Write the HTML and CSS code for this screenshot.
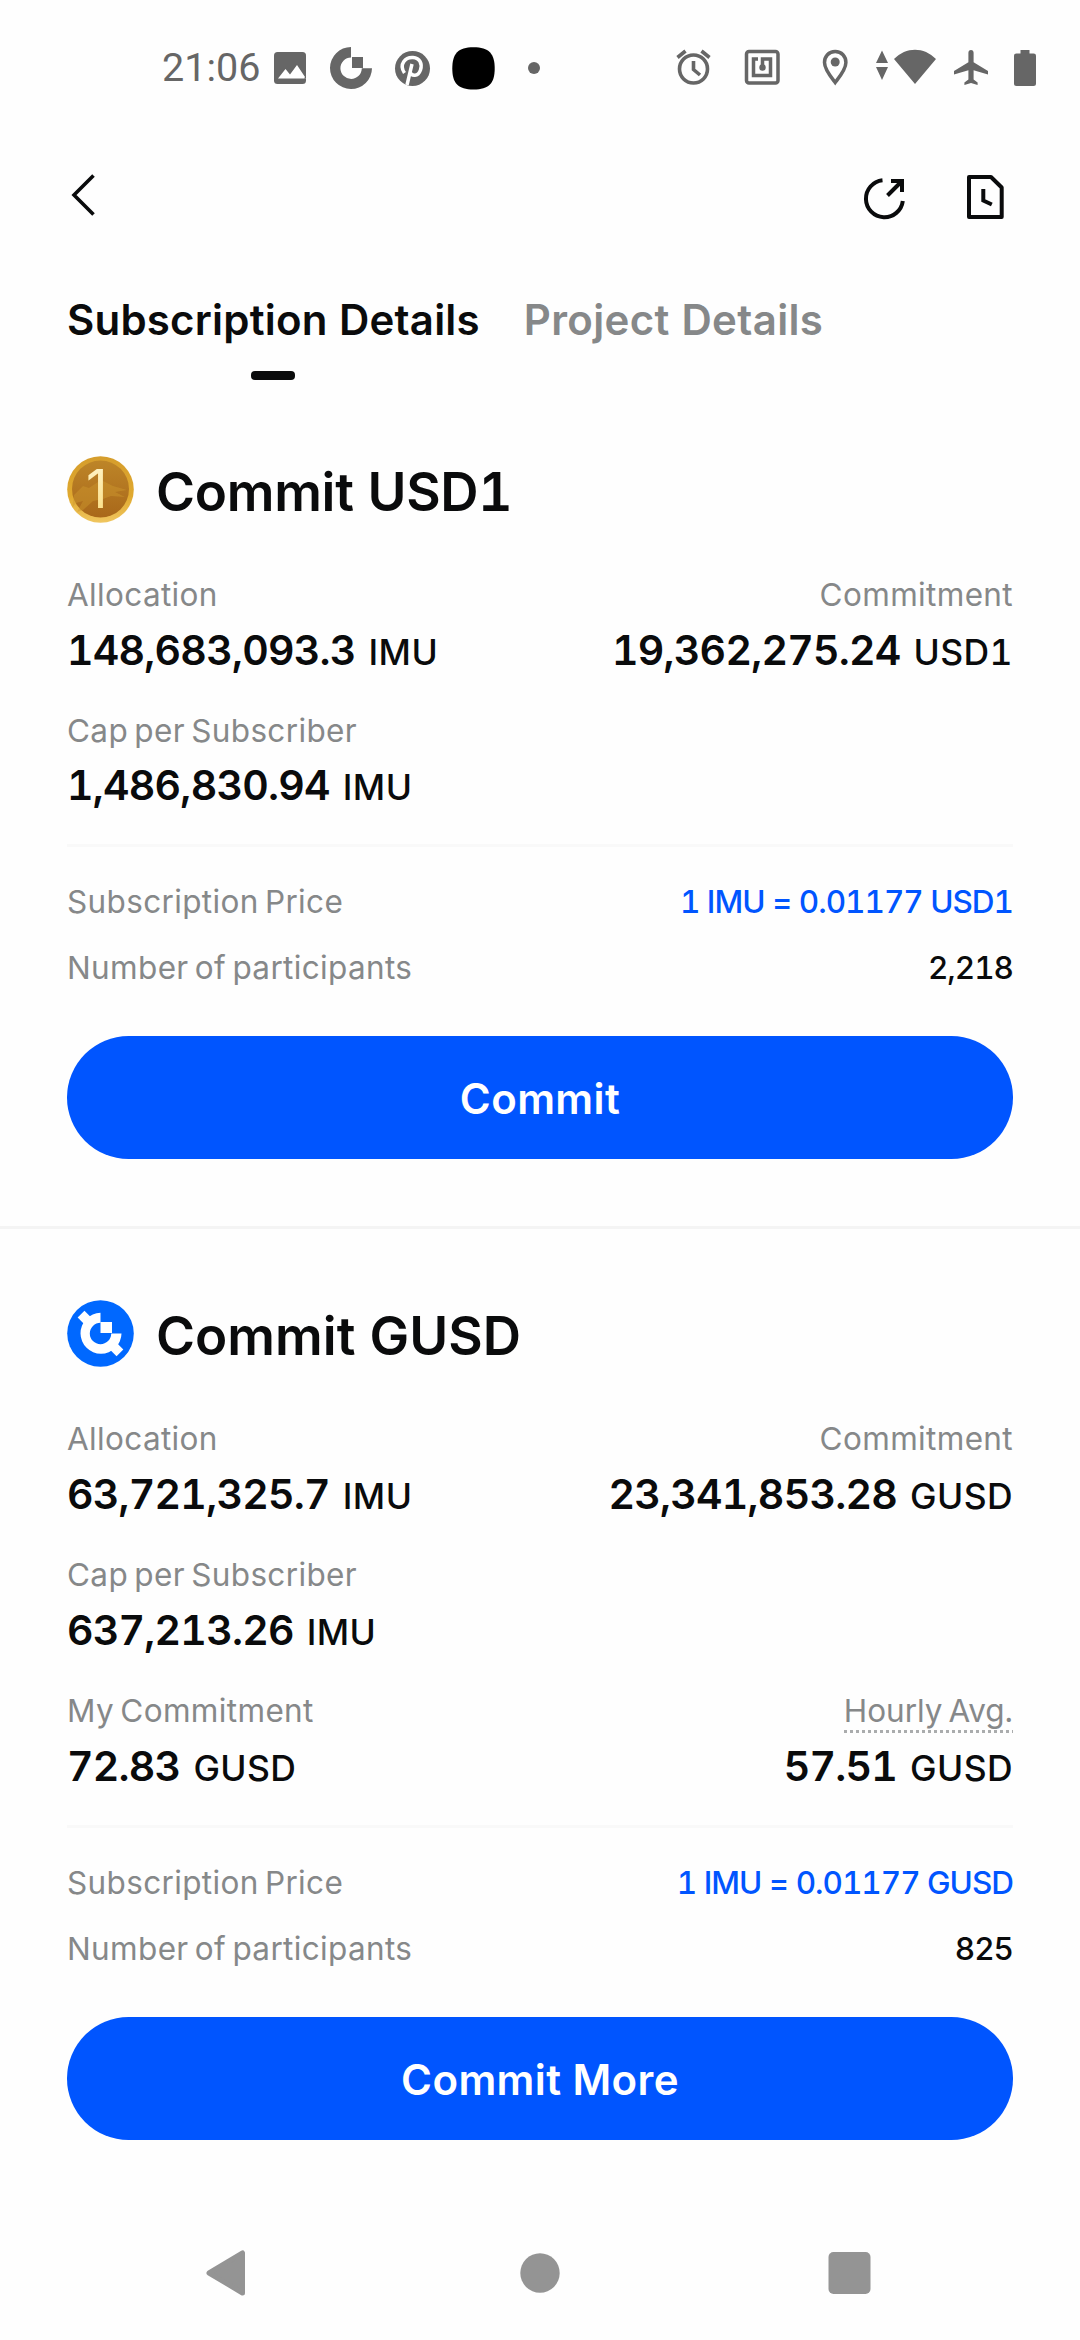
FILE: index.html
```html
<!DOCTYPE html>
<html lang="en">
<head>
<meta charset="utf-8">
<title>Subscription Details</title>
<link rel="stylesheet" href="styles.css">
</head>
<body>
<div class="screen">
  <div class="status">
    <div class="status-left">
      <span class="time">21:06</span>
      <svg width="36" height="44" viewBox="272 45 36 44"><rect x="274" y="51" width="32" height="32" rx="3.5" fill="#666"/><path d="M278 77.500l7.500-9.500 4.500 5.500 7-9.500 9 13.500z" fill="#fff"/><path d="M304 77.500h2v-3z" fill="#666"/></svg>
      <svg width="46" height="44" viewBox="328 45 46 44"><path d="M351 46a21 21 0 1 0 21 21.200H361.800A10.700 10.700 0 1 1 351 56.500z" fill="#666"/><rect x="352" y="56" width="11" height="11" fill="#666"/></svg>
      <svg width="40" height="44" viewBox="392 45 40 44"><circle cx="412.500" cy="67.500" r="17.500" fill="#666"/><path d="M407 84l5-21M404.500 72c-6-9 1-16 8.500-15.500 7 .5 9.500 6.500 7.500 12.500-2.500 7-9 6.500-10.500 2" fill="none" stroke="#fff" stroke-width="3.500"/></svg>
      <svg width="46" height="44" viewBox="450 45 46 44"><path d="M473.500 46.300c15.500 0 21.200 6.500 21.200 21.200s-5.700 21-21.200 21-21.200-6.300-21.200-21 5.700-21.200 21.200-21.200z"/></svg>
      <svg width="14" height="44" viewBox="527 45 14 44"><circle cx="534" cy="67" r="6" fill="#666"/></svg>
    </div>
    <div class="status-right">
      <svg width="38" height="44" viewBox="675 45 38 44" fill="none" stroke="#666" stroke-width="3.600"><circle cx="693.500" cy="68" r="14"/><path d="M693.500 60v8.500l6.500 5.500M677.500 56.500l8-6.500M709.500 56.500l-8-6.500"/></svg>
      <svg width="38" height="44" viewBox="743 45 38 44" fill="none" stroke="#666" stroke-width="3.500"><rect x="746.500" y="50.500" width="31.500" height="31.500" rx="2.500"/><path d="M758 58h-4.500v16.500h17V58h-8v9"/><circle cx="762.500" cy="66.500" r="3.200" fill="#666" stroke="none"/></svg>
      <svg width="28" height="44" viewBox="821 45 28 44"><path d="M835.200 50.500c-6.500 0-10.700 4.800-10.700 11 0 7 6.500 14.500 10.700 20 4.200-5.500 10.700-13 10.700-20 0-6.200-4.200-11-10.700-11z" fill="none" stroke="#666" stroke-width="3.500"/><circle cx="835.200" cy="61" r="4.500" fill="#666"/></svg>
      <svg width="62" height="44" viewBox="875 45 62 44" fill="#666"><path d="M882 49.500l6 12.500h-12zM882 79l6-13h-12zM915 83l-21-25c12-12.500 30-12.500 42 0z"/></svg>
      <svg width="36" height="44" viewBox="953 45 36 44" fill="#666"><path d="M971 49c-1.700 0-2.600 1.200-2.600 2.800v9.400L954 70v3.500l14.400-4.300v9.300l-4 3v2.500l6.600-1.900 6.600 1.900v-2.500l-4-3v-9.300l14.400 4.300V70l-14.400-8.800v-9.400c0-1.600-.9-2.800-2.600-2.800z"/></svg>
      <svg width="24" height="44" viewBox="1013 45 24 44" fill="#666"><path d="M1020.500 49h9v3.500h4c1.700 0 2.500.8 2.500 2.500v27.500c0 1.700-.8 2.500-2.500 2.500h-17c-1.700 0-2.500-.8-2.500-2.500V55c0-1.700.8-2.500 2.500-2.500h4z"/></svg>
    </div>
  </div>

  <header class="header">
    <svg width="28" height="60" viewBox="70 167 28 60" fill="none" stroke="#0a0b0c" stroke-width="3.600"><path d="M93.500 175.500L74 195l19.500 19.500"/></svg>
    <div class="actions">
      <svg width="46" height="60" viewBox="862 167 46 60" fill="none" stroke="#0a0b0c" stroke-width="4"><path d="M882.500 180.300A18.500 18.500 0 1 0 902.800 201M887.500 195.500L902 181M891 181h11v11"/></svg>
      <svg width="42" height="60" viewBox="965 167 42 60" fill="none" stroke="#0a0b0c" stroke-width="4" stroke-linejoin="round"><path d="M969 177h22l10.700 10.500V217H969z"/><path d="M983.300 189v11.500l8.500 4" stroke-linejoin="miter"/></svg>
    </div>
  </header>

  <nav class="tabs">
    <div class="tab active">Subscription Details</div>
    <div class="tab">Project Details</div>
  </nav>

  <section class="pool first">
    <div class="pool-head">
      <svg width="67" height="67" viewBox="0 0 67 67">
        <defs>
          <linearGradient id="rim" x1="0" y1="0" x2="0" y2="1"><stop offset="0" stop-color="#d59d2c"/><stop offset=".6" stop-color="#e0a92f"/><stop offset="1" stop-color="#f0c660"/></linearGradient>
          <linearGradient id="face" x1="0" y1="0" x2="0" y2="1"><stop offset="0" stop-color="#bd8528"/><stop offset="1" stop-color="#a9681a"/></linearGradient>
          <linearGradient id="one" x1="0" y1="0" x2="0" y2="1"><stop offset="0" stop-color="#fff6cf"/><stop offset="1" stop-color="#fbdc7c"/></linearGradient>
        </defs>
        <circle cx="33.500" cy="33.500" r="33.300" fill="url(#rim)"/>
        <circle cx="33.500" cy="33" r="28.500" fill="url(#face)"/>
        <path d="M7 39l9-9 6 2 12-8 12 6 14 4-12 2 10 5-14-1-8 3-10 2-10 9-6 2 6-11-7 2-4 5z" fill="#cf982f" opacity=".45"/>
        <text class="coin-one" x="19" y="52" fill="url(#one)">1</text>
      </svg>
      <h2 class="usd">Commit USD1</h2>
    </div>
    <div class="stats">
      <div class="stat"><div class="label">Allocation</div><div class="value">148,683,093.3<span class="unit">IMU</span></div></div>
      <div class="stat end"><div class="label">Commitment</div><div class="value">19,362,275.24<span class="unit">USD1</span></div></div>
      <div class="stat"><div class="label">Cap per Subscriber</div><div class="value">1,486,830.94<span class="unit">IMU</span></div></div>
    </div>
    <div class="details">
      <div class="row"><span class="label">Subscription Price</span><span class="data price">1 IMU = 0.01177 USD1</span></div>
      <div class="row"><span class="label">Number of participants</span><span class="data">2,218</span></div>
    </div>
    <button class="cta">Commit</button>
  </section>

  <section class="pool second">
    <div class="pool-head">
      <svg width="67" height="67" viewBox="0 0 67 67">
        <circle cx="33.500" cy="33.500" r="33.300" fill="#0068ff"/>
        <g fill="#fff">
          <rect x="-4.800" y="-27.500" width="9.600" height="12" transform="translate(33.500 33.500) rotate(-45)"/>
          <rect x="-4.800" y="-27.500" width="9.600" height="12" transform="translate(33.500 33.500) rotate(135)"/>
          <path d="M33.500 12.700a20.500 20.500 0 1 0 21 20.800H44.200a10.700 10.700 0 1 1-10.700-10.700z"/>
          <rect x="33.500" y="22" width="11.500" height="11"/>
        </g>
      </svg>
      <h2>Commit GUSD</h2>
    </div>
    <div class="stats">
      <div class="stat"><div class="label">Allocation</div><div class="value">63,721,325.7<span class="unit">IMU</span></div></div>
      <div class="stat end"><div class="label">Commitment</div><div class="value">23,341,853.28<span class="unit">GUSD</span></div></div>
      <div class="stat wide"><div class="label">Cap per Subscriber</div><div class="value">637,213.26<span class="unit">IMU</span></div></div>
      <div class="stat"><div class="label">My Commitment</div><div class="value">72.83<span class="unit">GUSD</span></div></div>
      <div class="stat end"><div class="label hint">Hourly Avg.</div><div class="value">57.51<span class="unit">GUSD</span></div></div>
    </div>
    <div class="details">
      <div class="row"><span class="label">Subscription Price</span><span class="data price">1 IMU = 0.01177 GUSD</span></div>
      <div class="row"><span class="label">Number of participants</span><span class="data">825</span></div>
    </div>
    <button class="cta">Commit More</button>
  </section>

  <div class="navbar">
    <svg width="40" height="46" viewBox="0 0 40 46"><path d="M36.500 3v40L3 23z" fill="#949494" stroke="#949494" stroke-width="5" stroke-linejoin="round"/></svg>
    <svg class="home" width="40" height="40" viewBox="0 0 40 40"><circle cx="20" cy="20" r="19.700" fill="#949494"/></svg>
    <svg class="recents" width="43" height="42" viewBox="0 0 43 42"><rect x=".5" width="42" height="42" rx="5" fill="#949494"/></svg>
  </div>
</div>
</body>
</html>
```
FILE: styles.css
```css
* { box-sizing: border-box; }

body {
  margin: 0;
  background: #fefefe;
  color: #0a0b0c;
  font-family: Inter, "Liberation Sans", sans-serif;
  font-feature-settings: "tnum";
}

svg { display: block; flex: none; }

.screen {
  width: 1080px;
  height: 2340px;
  display: flex;
  flex-direction: column;
  overflow: hidden;
}

.status {
  height: 135px;
  padding: 0 43px 0 162px;
  display: flex;
  justify-content: space-between;
  align-items: center;
}
.status-left, .status-right { display: flex; align-items: center; }
.time {
  width: 110px;
  padding-top: 1px;
  font: 400 39.5px/44px Roboto, sans-serif;
  color: #666;
}
.status-left svg + svg { margin-left: 18px; }
.status-left svg:nth-child(3) { margin-left: 20px; }
.status-left svg:last-child { margin-left: 31px; }
.status-right { gap: 27px; }
.status-right svg:nth-child(2) { margin-left: 3px; }
.status-right svg:nth-child(3) { margin-left: 13px; }
.status-right svg:nth-child(4) { margin-left: -1px; }
.status-right svg:nth-child(5) { margin-left: -11px; }
.status-right svg:nth-child(6) { margin-left: -3px; }

.header {
  height: 124px;
  padding: 0 73px 0 70px;
  display: flex;
  justify-content: space-between;
  align-items: center;
}
.actions { display: flex; gap: 57px; }

.tabs {
  display: flex;
  gap: 44px;
  margin-top: 31px;
  padding: 0 67px;
}
.tab {
  font-size: 42px;
  line-height: 60px;
  font-weight: 600;
  letter-spacing: .35px;
  color: #868889;
}
.tab.active { color: #0a0b0c; letter-spacing: .2px; }
.tab.active::after {
  content: "";
  display: block;
  width: 44px;
  height: 9px;
  margin: 21px auto 0;
  border-radius: 4px;
  background: #0a0b0c;
}

.pool { padding: 0 67px; }
.first { padding-top: 76px; padding-bottom: 67px; border-bottom: 3px solid #f4f4f4; }
.second { padding-top: 71px; }

.pool-head { display: flex; gap: 22px; height: 67px; }
.pool-head h2 {
  margin: 0;
  padding-top: 5px;
  font-size: 53px;
  line-height: 63px;
  font-weight: 600;
}
.pool-head .usd { letter-spacing: -.3px; }
.coin-one { font-family: Inter, sans-serif; font-size: 53px; font-weight: 400; font-feature-settings: normal; }

.stats {
  display: grid;
  grid-template-columns: auto auto;
  justify-content: space-between;
  row-gap: 33.4px;
  margin-top: 52px;
}
.wide { grid-column: 1 / -1; }
.stat { display: flex; flex-direction: column; gap: 6.5px; align-items: flex-start; }
.end { align-items: flex-end; }
.label {
  font-size: 31.5px;
  line-height: 40px;
  letter-spacing: .35px;
  word-spacing: -2.5px;
  color: #868889;
}
.hint {
  height: 40px;
  box-sizing: content-box;
  padding-bottom: 2px;
  margin-bottom: -2px;
  letter-spacing: 0;
  background: repeating-linear-gradient(90deg, #aaacad 0 3px, transparent 3px 6px) 0 100% / 100% 3px no-repeat;
}
.value {
  font-size: 41px;
  line-height: 56px;
  font-weight: 600;
  letter-spacing: -.75px;
  white-space: nowrap;
}
.unit {
  margin-left: 13px;
  font-size: 35.5px;
  line-height: 1;
  font-weight: 500;
  letter-spacing: .4px;
}

.details {
  display: flex;
  flex-direction: column;
  gap: 26px;
  margin-top: 31px;
  padding-top: 35px;
  border-top: 3px solid #f9f9f9;
}
.row { display: flex; justify-content: space-between; }
.data {
  font-size: 31.5px;
  line-height: 40px;
  font-weight: 500;
  letter-spacing: -1px;
}
.price { color: #0055ff; }

.cta {
  display: block;
  width: 100%;
  height: 123px;
  margin-top: 48px;
  padding: 3px 0 0;
  border: 0;
  border-radius: 62px;
  background: #0055ff;
  color: #fff;
  font: 600 42px/60px Inter, sans-serif;
  letter-spacing: .4px;
}

.navbar {
  height: 134px;
  margin-top: auto;
  padding-left: 206px;
  display: flex;
  align-items: center;
}
.home { margin-left: 274px; }
.recents { margin-left: 268px; }
```
